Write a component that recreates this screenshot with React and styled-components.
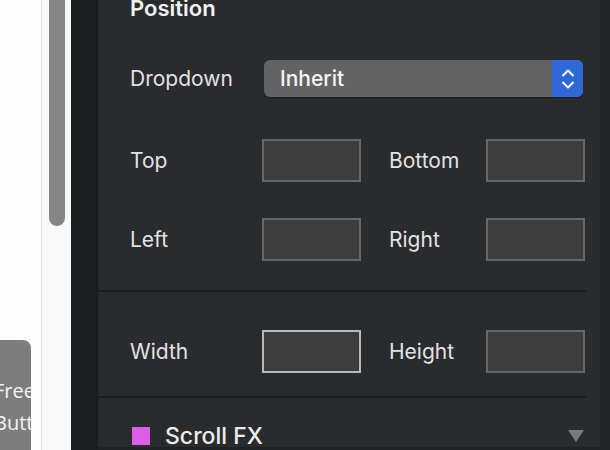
import styled, { createGlobalStyle } from "styled-components";

const GlobalStyle = createGlobalStyle`
  html, body {
    margin: 0;
    padding: 0;
    width: 610px;
    height: 450px;
    overflow: hidden;
    background: #2a2b2d;
  }
  * {
    box-sizing: border-box;
  }
`;

export default function App() {
  const rows = [
    [
      { label: "Top", focused: false },
      { label: "Bottom", focused: false },
    ],
    [
      { label: "Left", focused: false },
      { label: "Right", focused: false },
    ],
  ];

  return (
    <Page>
      <GlobalStyle />
      <Canvas>
        <FreeButton>Free Button</FreeButton>
      </Canvas>
      <ScrollTrack>
        <ScrollThumb />
      </ScrollTrack>
      <SideStrip />
      <Panel>
        <Title>Position</Title>
        <DropdownRow>
          <Label>Dropdown</Label>
          <Select>
            <SelectValue>Inherit</SelectValue>
            <SelectArrows>
              <svg width="14" height="24" viewBox="0 0 14 24" fill="none">
                <path
                  d="M2 8.5 L7 3.5 L12 8.5"
                  stroke="#fff"
                  strokeWidth="2"
                  strokeLinecap="round"
                  strokeLinejoin="round"
                />
                <path
                  d="M2 15.5 L7 20.5 L12 15.5"
                  stroke="#fff"
                  strokeWidth="2"
                  strokeLinecap="round"
                  strokeLinejoin="round"
                />
              </svg>
            </SelectArrows>
          </Select>
        </DropdownRow>
        <FieldGroup>
          {rows.map((row, i) => (
            <FieldRow key={i}>
              {row.map(({ label, focused }) => (
                <Field key={label}>
                  <Label>{label}</Label>
                  <Box $focused={focused} />
                </Field>
              ))}
            </FieldRow>
          ))}
        </FieldGroup>
        <Divider />
        <SizeGroup>
          <FieldRow>
            <Field>
              <Label>Width</Label>
              <Box $focused />
            </Field>
            <Field>
              <Label>Height</Label>
              <Box />
            </Field>
          </FieldRow>
        </SizeGroup>
        <Divider />
        <SectionHeader>
          <Swatch />
          <SectionTitle>Scroll FX</SectionTitle>
          <Caret />
        </SectionHeader>
      </Panel>
      <Gutter />
    </Page>
  );
}

const Page = styled.div`
  display: flex;
  width: 610px;
  height: 450px;
  overflow: hidden;
  font-family: Inter, "Noto Sans", sans-serif;
`;

const Canvas = styled.div`
  width: 42px;
  flex-shrink: 0;
  background: #fdfdfd;
  border-right: 1px solid #e6e6e6;
  display: flex;
  flex-direction: column;
  justify-content: flex-end;
  overflow: hidden;
`;

const FreeButton = styled.div`
  width: 71px;
  height: 110px;
  flex-shrink: 0;
  margin-left: -40px;
  padding: 35px 0 0 34px;
  background: #7d7d7d;
  border-radius: 0 8px 0 0;
  overflow: hidden;
  color: #f4f4f4;
  font-family: "Open Sans", sans-serif;
  font-size: 20px;
  line-height: 32px;
  text-align: left;
`;

const ScrollTrack = styled.div`
  width: 29px;
  flex-shrink: 0;
  background: #f9f9f9;
  padding: 0 5px 0 7px;
`;

const ScrollThumb = styled.div`
  width: 16px;
  height: 226px;
  background: #858585;
  border-radius: 0 0 8px 8px;
`;

const SideStrip = styled.div`
  width: 27px;
  flex-shrink: 0;
  background: #1e1f21;
  border-right: 1px solid #1a1b1d;
`;

const Panel = styled.div`
  width: 502px;
  flex-shrink: 0;
  background: #2a2b2d;
  display: flex;
  flex-direction: column;
  overflow: hidden;
  border-bottom: 3px solid #202123;

  & > * {
    flex-shrink: 0;
  }
`;

const Title = styled.div`
  margin: -7px 0 0 32px;
  height: 30px;
  font-size: 22px;
  font-weight: 600;
  line-height: 30px;
  color: #f2f2f2;
`;

const Label = styled.div`
  font-size: 21px;
  color: #e2e2e2;
  line-height: 26px;
`;

const DropdownRow = styled.div`
  display: grid;
  grid-template-columns: 134px 319px;
  align-items: center;
  margin: 37px 0 0 32px;
`;

const Select = styled.div`
  height: 37px;
  display: flex;
  border-radius: 6px;
  overflow: hidden;
  background: #636363;
  box-shadow: 0 1px 1px rgba(0, 0, 0, 0.35);
`;

const SelectValue = styled.div`
  flex: 1;
  padding-left: 16px;
  display: flex;
  align-items: center;
  font-size: 21px;
  font-weight: 500;
  color: #f5f5f5;
`;

const SelectArrows = styled.div`
  width: 31px;
  display: flex;
  align-items: center;
  justify-content: center;
  background: #2f69d8;
`;

const FieldGroup = styled.div`
  display: flex;
  flex-direction: column;
  gap: 36px;
  margin: 42px 0 0 32px;
  padding-bottom: 29px;
`;

const SizeGroup = styled.div`
  margin: 0 0 0 32px;
  padding: 38px 0 23px;
`;

const FieldRow = styled.div`
  display: grid;
  grid-template-columns: 231px 196px;
  gap: 28px;
`;

const Field = styled.div`
  display: flex;
  align-items: center;
  justify-content: space-between;
`;

const Box = styled.div`
  width: 99px;
  height: 43px;
  background: #3d3d3d;
  border: 2px solid ${({ $focused }) => ($focused ? "#b8b8b8" : "#676767")};
`;

const Divider = styled.div`
  width: 490px;
  height: 2px;
  margin-left: -2px;
  background: #1c1d1f;
`;

const SectionHeader = styled.div`
  display: flex;
  align-items: center;
  margin: 24px 0 0 34px;
  width: 452px;
`;

const Swatch = styled.div`
  width: 18px;
  height: 18px;
  background: #dc5ee6;
  margin-right: 15px;
`;

const SectionTitle = styled.div`
  flex: 1;
  font-size: 23px;
  font-weight: 500;
  line-height: 28px;
  color: #ececec;
`;

const Caret = styled.div`
  width: 0;
  height: 0;
  border-left: 8px solid transparent;
  border-right: 8px solid transparent;
  border-top: 12px solid #7a7a7a;
`;

const Gutter = styled.div`
  flex: 1;
  background: #252628;
`;
